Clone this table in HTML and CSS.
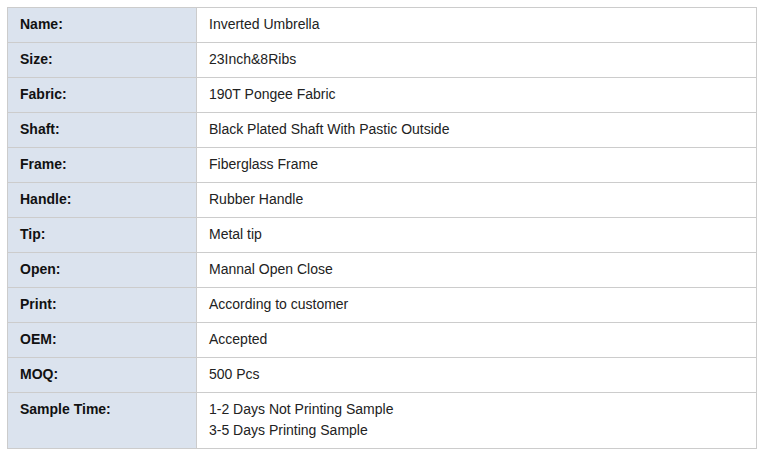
FILE: index.html
```html
<!DOCTYPE html>
<html>
<head>
<meta charset="utf-8">
<link rel="stylesheet" href="styles.css">
</head>
<body>
<table class="spec">
  <tr><td class="label">Name:</td><td class="value">Inverted Umbrella</td></tr>
  <tr><td class="label">Size:</td><td class="value">23Inch&amp;8Ribs</td></tr>
  <tr><td class="label">Fabric:</td><td class="value">190T Pongee Fabric</td></tr>
  <tr><td class="label">Shaft:</td><td class="value">Black Plated Shaft With Pastic Outside</td></tr>
  <tr><td class="label">Frame:</td><td class="value">Fiberglass Frame</td></tr>
  <tr><td class="label">Handle:</td><td class="value">Rubber Handle</td></tr>
  <tr><td class="label">Tip:</td><td class="value">Metal tip</td></tr>
  <tr><td class="label">Open:</td><td class="value">Mannal Open Close</td></tr>
  <tr><td class="label">Print:</td><td class="value">According to customer</td></tr>
  <tr><td class="label">OEM:</td><td class="value">Accepted</td></tr>
  <tr><td class="label">MOQ:</td><td class="value">500 Pcs</td></tr>
  <tr><td class="label top">Sample Time:</td><td class="value">1-2 Days Not Printing Sample<br>3-5 Days Printing Sample</td></tr>
</table>
</body>
</html>
```
FILE: styles.css
```css
html, body { margin: 0; padding: 0; background: #fff; }
body { padding: 7px; font-family: "Liberation Sans", Arial, sans-serif; font-size: 14px; color: #222; }
.spec { border-collapse: collapse; width: 750px; table-layout: fixed; }
.spec td { border: 1px solid #cccccc; padding: 6px 12px 7px; line-height: 21px; height: 21px; }
.spec .label { width: 164px; background: #dbe3ee; font-weight: bold; color: #111; vertical-align: middle; }
.spec .label.top { vertical-align: top; }
.spec .value { background: #fff; }
```
